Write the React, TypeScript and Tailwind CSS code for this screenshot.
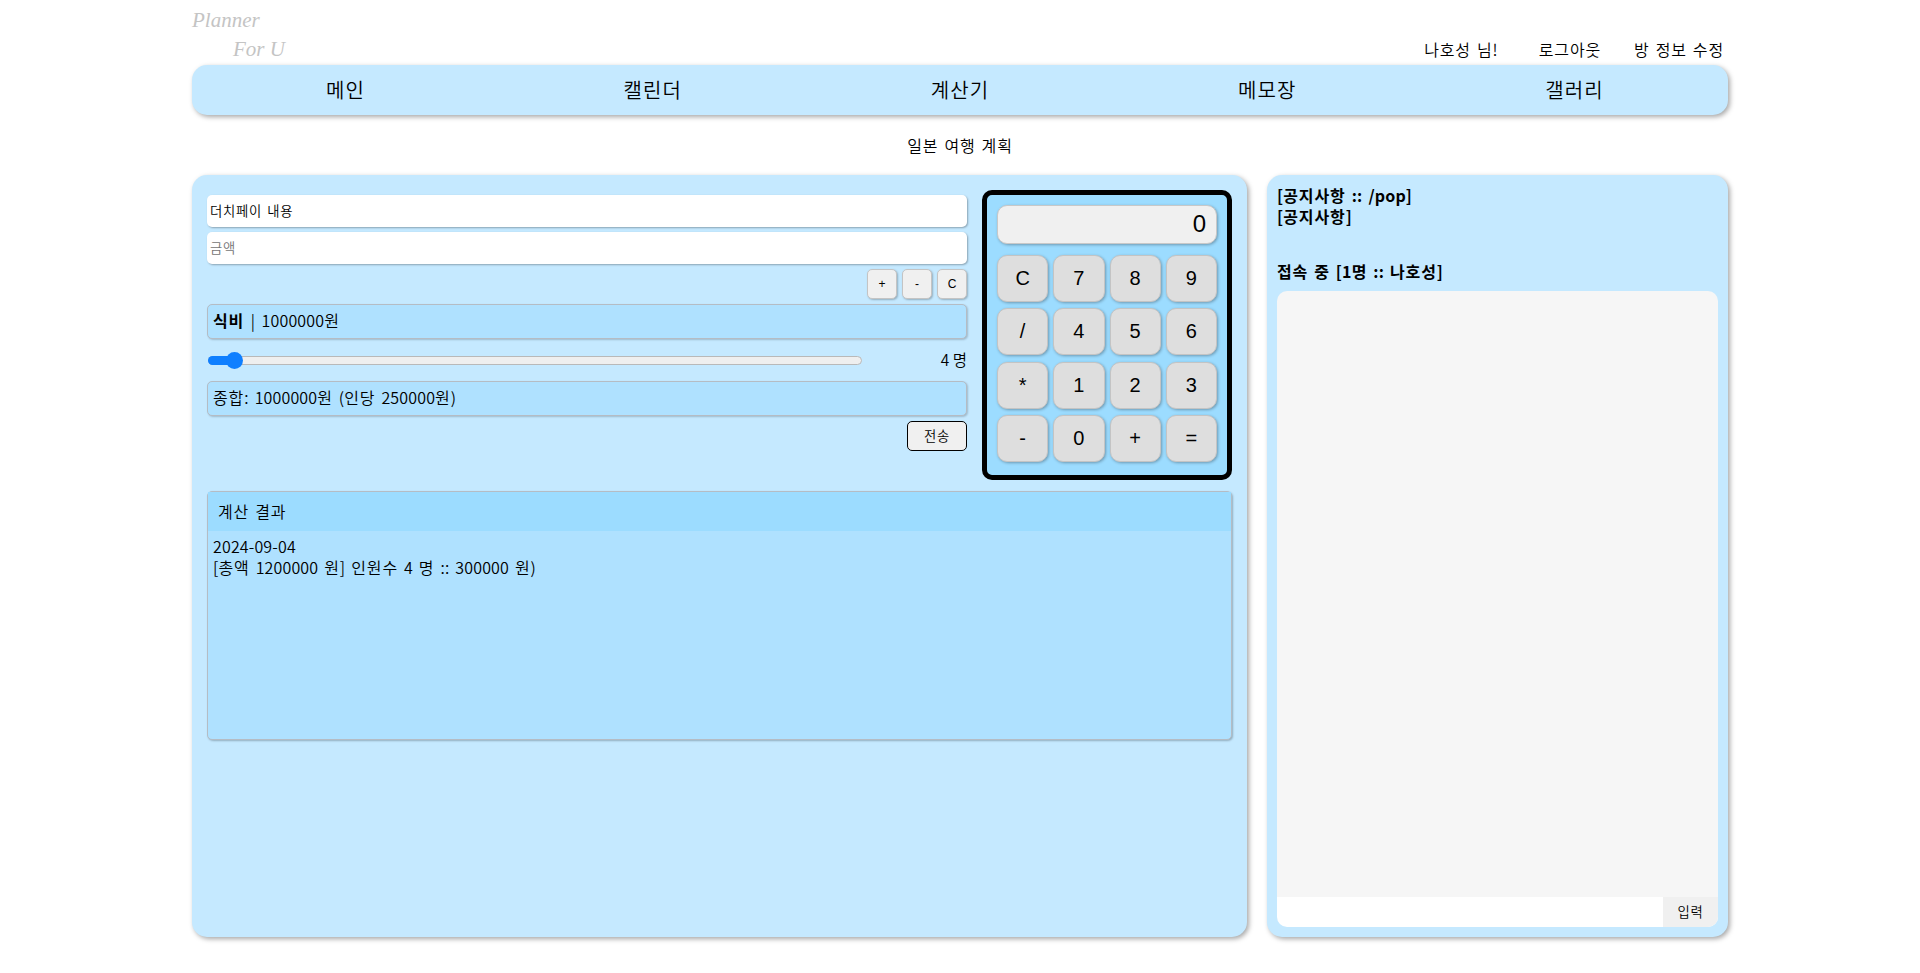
const navItems = ['메인', '캘린더', '계산기', '메모장', '갤러리'];
const calcKeys = ['C', '7', '8', '9', '/', '4', '5', '6', '*', '1', '2', '3', '-', '0', '+', '='];

// Hangul runs are a bit wider in the reference than digits, so only they get more spacing
function Ko({ text }: { text: string }) {
  const parts = text.split(/([가-힣 ]+)/);
  return (
    <>
      {parts.map((p, i) =>
        i % 2 === 1 ? (
          <span key={i} className="tracking-[0.055em] [word-spacing:1.5px]">
            {p}
          </span>
        ) : (
          <span key={i} className="tracking-[0.01em]">
            {p}
          </span>
        ),
      )}
    </>
  );
}

function SmallButton({ label }: { label: string }) {
  return (
    <button className="w-[30px] h-[30px] rounded-[5px] bg-[#f0f0f0] border border-[#c4c4c4] shadow-[1px_1px_2px_rgba(0,0,0,0.25)] text-[12px] font-['Liberation_Sans',sans-serif] text-black">
      {label}
    </button>
  );
}

function Slider() {
  return (
    <div className="flex items-center h-[32px] my-[5px]">
      <div className="relative w-[654px] h-[9px] ml-[1px] rounded-full bg-[#efefef] border border-[#b9b9b9]">
        <div className="absolute -left-px -top-px h-[9px] w-[26px] rounded-l-full bg-[#0f7fff]" />
        <div className="absolute left-[17px] top-[-5px] w-[17px] h-[17px] rounded-full bg-[#0f7fff]" />
      </div>
      <span className="ml-auto text-[15.5px] leading-none">4 명</span>
    </div>
  );
}

function Calculator() {
  return (
    <div className="w-[250px] h-[290px] shrink-0 rounded-[10px] border-[5px] border-black bg-[#9cdcff] p-[10px]">
      <div className="h-[39px] rounded-[10px] bg-[#f0f0f0] border border-[#c8c8c8] shadow-[1px_1px_3px_rgba(0,0,0,0.3)] flex items-center justify-end pr-[10px] pb-[1px] text-[24px] font-['Liberation_Sans',sans-serif]">
        0
      </div>
      <div className="grid grid-cols-4 gap-x-[5px] gap-y-[6.33px] mt-[11px]">
        {calcKeys.map((k) => (
          <button
            key={k}
            className="h-[47px] pb-[1px] rounded-[10px] bg-[#dedede] border border-[#c4c4c4] shadow-[1px_1px_3px_rgba(0,0,0,0.3)] text-[20px] font-['Liberation_Sans',sans-serif] text-black"
          >
            {k}
          </button>
        ))}
      </div>
    </div>
  );
}

export default function App() {
  return (
    <div className="w-[1536px] h-[973px] mx-auto font-['Noto_Sans_CJK_KR',sans-serif] font-[350] text-black bg-white">
      {/* Header */}
      <header className="h-[65px] flex justify-between items-end">
        <div className="w-[120px] h-[65px] pt-[6px] font-['Liberation_Serif',serif] font-normal italic text-[21px] leading-[29px] text-[#c4c4c4]">
          <div>Planner</div>
          <div className="pl-[41px]">For U</div>
        </div>
        <div className="flex items-center gap-[41px] text-[16px] leading-[20px] pr-[4px] pb-[6px]">
          <span><Ko text="나호성 님!" /></span>
          <span><Ko text="로그아웃" /></span>
          <span className="-ml-[8px]"><Ko text="방 정보 수정" /></span>
        </div>
      </header>

      {/* Nav */}
      <nav className="h-[50px] flex rounded-[15px] bg-[#c5e9ff] shadow-[2px_2px_5px_rgba(0,0,0,0.35)]">
        {navItems.map((n) => (
          <div key={n} className="flex-1 flex items-center justify-center text-[20px]">
            <Ko text={n} />
          </div>
        ))}
      </nav>

      <div className="h-[60px] flex items-center justify-center text-[16px]">
        <Ko text="일본 여행 계획" />
      </div>

      <div className="flex gap-[20px]">
        {/* Left panel */}
        <section className="w-[1055px] h-[762px] rounded-[15px] bg-[#c5e9ff] shadow-[2px_2px_5px_rgba(0,0,0,0.35)] px-[15px] pt-[15px]">
          <div className="flex gap-[15px]">
            <div className="w-[760px] pt-[5px]">
              <div className="h-[32px] rounded-[5px] bg-white shadow-[1px_1px_2px_rgba(0,0,0,0.3)] flex items-center px-[3px] text-[13.33px]">
                <Ko text="더치페이 내용" />
              </div>
              <div className="h-[32px] mt-[5px] rounded-[5px] bg-white shadow-[1px_1px_2px_rgba(0,0,0,0.3)] flex items-center px-[3px] text-[13.33px] text-[#757575]">
                <Ko text="금액" />
              </div>
              <div className="flex justify-end gap-[5px] mt-[5px]">
                <SmallButton label="+" />
                <SmallButton label="-" />
                <SmallButton label="C" />
              </div>
              <div className="h-[35px] mt-[5px] rounded-[5px] bg-[#afe1ff] border-[1.5px] border-[#b5bcc4] shadow-[1px_1px_2px_rgba(0,0,0,0.2)] flex items-center px-[5px] pb-[3px] text-[16px]">
                <span className="[word-spacing:3px]">
                  <b className="font-bold"><Ko text="식비" /></b> | <Ko text="1000000원" />
                </span>
              </div>
              <Slider />
              <div className="h-[35px] rounded-[5px] bg-[#afe1ff] border-[1.5px] border-[#b5bcc4] shadow-[1px_1px_2px_rgba(0,0,0,0.2)] flex items-center px-[5px] pb-[3px] text-[16px]">
                <span><Ko text="종합: 1000000원 (인당 250000원)" /></span>
              </div>
              <div className="flex justify-end mt-[5px]">
                <button className="w-[60px] h-[30px] rounded-[5px] bg-[#f0f0f0] border border-black text-[13.33px]">
                  <Ko text="전송" />
                </button>
              </div>
            </div>
            <Calculator />
          </div>

          {/* Result */}
          <div className="mt-[11px] h-[249px] rounded-[5px] bg-[#afe1ff] border-[1.5px] border-[#b5bcc4] shadow-[1px_1px_2px_rgba(0,0,0,0.25)]">
            <div className="h-[39px] bg-[#9cdcff] flex items-center px-[10px] pb-[1px] text-[16px]">
              <span><Ko text="계산 결과" /></span>
            </div>
            <div className="px-[5px] pt-[5px] text-[16px] leading-[21px]">
              <div><Ko text="2024-09-04" /></div>
              <div><Ko text="[총액 1200000 원] 인원수 4 명 :: 300000 원)" /></div>
            </div>
          </div>
        </section>

        {/* Right panel */}
        <aside className="flex-1 h-[762px] rounded-[15px] bg-[#c5e9ff] shadow-[2px_2px_5px_rgba(0,0,0,0.35)] p-[10px] flex flex-col">
          <div className="text-[16px] leading-[21px] font-bold">
            <div><Ko text="[공지사항 :: /pop]" /></div>
            <div><Ko text="[공지사항]" /></div>
          </div>
          <div className="mt-[34px] text-[16px] leading-[21px] font-bold">
            <Ko text="접속 중 [1명 :: 나호성]" />
          </div>
          <div className="mt-[9px] flex-1 flex flex-col rounded-[10px] overflow-hidden">
            <div className="flex-1 bg-[#f6f6f6]" />
            <div className="h-[30px] flex bg-white">
              <div className="flex-1" />
              <button className="w-[55px] bg-[#f0f0f0] text-[13.33px]">
                <Ko text="입력" />
              </button>
            </div>
          </div>
        </aside>
      </div>
    </div>
  );
}
